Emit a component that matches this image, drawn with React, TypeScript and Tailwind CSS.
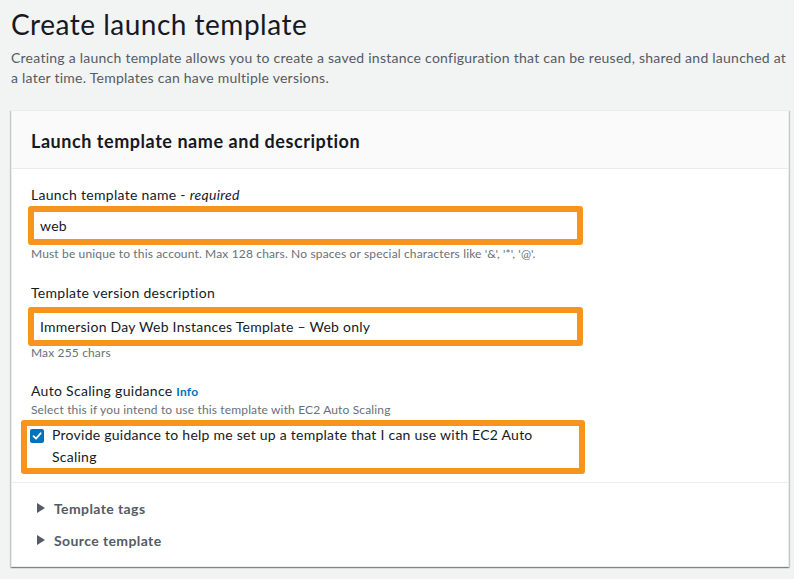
import React from "react"

const font = { fontFamily: "Lato, 'Liberation Sans', sans-serif" }

function Caret() {
  return (
    <svg width="8" height="10" viewBox="0 0 8 10" className="shrink-0">
      <polygon points="0,0 8,5 0,10" fill="#545b64" />
    </svg>
  )
}

function Check() {
  return (
    <span className="flex h-[14px] w-[14px] shrink-0 items-center justify-center rounded-[2px] bg-[#0073bb]">
      <svg width="10" height="10" viewBox="0 0 10 10">
        <polyline points="1.5,5.2 4,7.7 8.6,2.3" fill="none" stroke="#fff" strokeWidth="1.8" strokeLinecap="round" strokeLinejoin="round" />
      </svg>
    </span>
  )
}

export default function App() {
  return (
    <div className="min-h-screen bg-white tracking-[0.25px]" style={font}>
      <div className="h-[579px] w-[794px] bg-[#f2f3f3] pl-[11px] pr-[5px] pt-[6px]">
        <h1 className="text-[28px] leading-[36px] font-normal tracking-[0.5px] text-[#16191f]">Create launch template</h1>
        <p className="mt-[6px] text-[14px] leading-[20px] text-[#545b64]">
          Creating a launch template allows you to create a saved instance configuration that can be reused, shared and launched at
          <br />
          a later time. Templates can have multiple versions.
        </p>

        <div className="mt-[22px] border border-[#eaeded] bg-white shadow-[0_1px_1px_0_rgba(0,28,36,0.3),1px_1px_1px_0_rgba(0,28,36,0.15),-1px_1px_1px_0_rgba(0,28,36,0.15)]">
          <div className="flex h-[58px] items-center border-b border-[#eaeded] bg-[#fafafa] px-[19px] pt-[3px]">
            <h2 className="text-[18px] font-bold tracking-[0.55px] text-[#16191f]">Launch template name and description</h2>
          </div>

          <div className="px-[19px] pt-[16px] pb-[8px]">
            <label className="block text-[14px] leading-[20px] tracking-[0.3px] text-[#16191f]">
              Launch template name - <i>required</i>
            </label>
            <div className="mt-[1px] ml-[-3px] flex h-[39px] w-[555px] items-center rounded-[3px] border-[6px] border-[#f7941d] bg-white pl-[6px]">
              <span className="text-[14px] text-[#16191f]">web</span>
            </div>
            <p className="mt-[1px] text-[12px] leading-[16px] tracking-[0.15px] text-[#687078]">
              Must be unique to this account. Max 128 chars. No spaces or special characters like '&amp;', '*', '@'.
            </p>

            <label className="mt-[21px] block text-[14px] leading-[20px] tracking-[0.3px] text-[#16191f]">Template version description</label>
            <div className="mt-[4px] ml-[-3px] flex h-[39px] w-[555px] items-center rounded-[3px] border-[6px] border-[#f7941d] bg-white pl-[6px]">
              <span className="text-[14px] text-[#16191f]">Immersion Day Web Instances Template – Web only</span>
            </div>
            <p className="text-[12px] leading-[14px] tracking-[0.15px] text-[#687078]">Max 255 chars</p>

            <div className="mt-[21px] text-[14px] leading-[20px] tracking-[0.3px] text-[#16191f]">
              Auto Scaling guidance <span className="text-[12px] font-bold tracking-[0.2px] text-[#0073bb]">Info</span>
            </div>
            <p className="text-[12px] leading-[16px] tracking-[0.15px] text-[#687078]">Select this if you intend to use this template with EC2 Auto Scaling</p>

            <div className="mt-[2px] ml-[-10px] flex w-[564px] items-start gap-[8px] rounded-[3px] border-[6px] border-[#f7941d] bg-white pl-[3px]">
              <span className="mt-[3px]">
                <Check />
              </span>
              <span className="mt-[-2px] text-[14px] leading-[22px] text-[#16191f]">
                Provide guidance to help me set up a template that I can use with EC2 Auto
                <br />
                Scaling
              </span>
            </div>
          </div>

          <div className="border-t border-[#eaeded] px-[19px] pt-[9px] pb-[10px]">
            <div className="flex h-[32px] items-center gap-[9px] pl-[6px] text-[14px] font-bold tracking-[0.4px] text-[#545b64]">
              <Caret />
              Template tags
            </div>
            <div className="flex h-[32px] items-center gap-[9px] pl-[6px] text-[14px] font-bold tracking-[0.4px] text-[#545b64]">
              <Caret />
              Source template
            </div>
          </div>
        </div>
      </div>
    </div>
  )
}
